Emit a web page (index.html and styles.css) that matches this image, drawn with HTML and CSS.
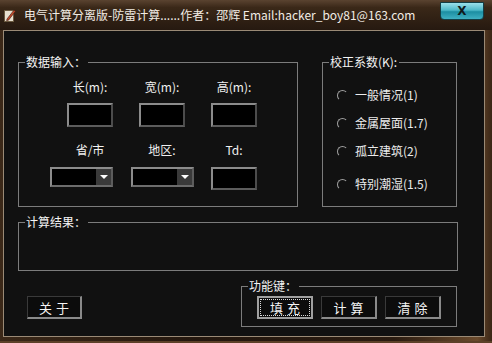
FILE: index.html
```html
<!DOCTYPE html>
<html lang="zh-CN">
<head>
    <meta charset="UTF-8">
    <title>电气计算分离版-防雷计算</title>
    <link rel="stylesheet" href="styles.css">
</head>
<body>
    <div class="window">
        <div class="titlebar">
            <svg class="app-icon" width="12" height="15" viewBox="0 0 12 15">
                <rect x="0.5" y="2.5" width="9" height="11" fill="#e8e0d0" stroke="#6b5a40"/>
                <path d="M3 11 L10 2 L11.5 3.2 L4.5 12.2 L2.6 12.6 Z" fill="#c24a2a" stroke="#3a1a10" stroke-width="0.6"/>
            </svg>
            <span class="title">电气计算分离版-防雷计算......作者：邵辉 Email:hacker_boy81@163.com</span>
            <div class="close">X</div>
        </div>
        <div class="client">
            <div class="top-row">
                <fieldset class="group data">
                    <legend>数据输入：</legend>
                    <div class="data-grid">
                        <span class="lbl">长(m):</span>
                        <span class="lbl">宽(m):</span>
                        <span class="lbl">高(m):</span>
                        <input class="field r1" type="text">
                        <input class="field r1" type="text">
                        <input class="field r1" type="text">
                        <span class="lbl r2">省/市</span>
                        <span class="lbl r2">地区:</span>
                        <span class="lbl r2">Td:</span>
                        <div class="combo first"><span class="combo-btn"></span></div>
                        <div class="combo"><span class="combo-btn"></span></div>
                        <input class="field td" type="text">
                    </div>
                </fieldset>
                <fieldset class="group coef">
                    <legend>校正系数(K):</legend>
                    <div class="radios">
                        <label class="radio"><span class="dot"></span>一般情况(1)</label>
                        <label class="radio"><span class="dot"></span>金属屋面(1.7)</label>
                        <label class="radio"><span class="dot"></span>孤立建筑(2)</label>
                        <label class="radio last"><span class="dot"></span>特别潮湿(1.5)</label>
                    </div>
                </fieldset>
            </div>
            <fieldset class="group result">
                <legend>计算结果：</legend>
            </fieldset>
            <div class="bottom-row">
                <button class="btn about">关于</button>
                <fieldset class="group keys">
                    <legend>功能键：</legend>
                    <div class="key-row">
                        <button class="btn default"><span class="focus">填充</span></button>
                        <button class="btn">计算</button>
                        <button class="btn">清除</button>
                    </div>
                </fieldset>
            </div>
        </div>
    </div>
</body>
</html>
```

FILE: styles.css
```css
body {
    margin: 0;
    padding: 0;
    width: 492px;
    height: 343px;
    overflow: hidden;
    background: #2a1c12;
    font-family: "Noto Sans CJK SC", "DejaVu Sans", sans-serif;
}
.window {
    width: 492px;
    height: 343px;
    box-sizing: border-box;
    display: flex;
    flex-direction: column;
    background: linear-gradient(90deg, #3b2818 0%, #24170e 40%, #2a1b10 80%, #6a4a2c 97%, #3a2616 100%);
    border-bottom: 2px solid #5c4028;
}
.titlebar {
    height: 30px;
    display: flex;
    align-items: flex-start;
    padding: 0 8px 0 4px;
    background: linear-gradient(180deg, #5a4330 0%, #3a2818 25%, #261910 100%);
    box-sizing: border-box;
}
.app-icon {
    margin-top: 8px;
    margin-right: 8px;
    flex: none;
}
.title {
    flex: 1;
    min-width: 0;
    margin-top: 7px;
    color: #f2ece4;
    font-size: 12px;
    line-height: 16px;
    white-space: nowrap;
    overflow: hidden;
}
.close {
    flex: none;
    width: 44px;
    height: 18px;
    margin-top: 2px;
    box-sizing: border-box;
    border: 1px solid #123e46;
    border-radius: 0 0 4px 4px;
    background: linear-gradient(180deg, #9be0ea 0%, #4db8c8 45%, #1c8ea2 55%, #3fb0c2 100%);
    color: #101a1c;
    font: bold 12px/16px "DejaVu Sans", sans-serif;
    text-align: center;
}
.client {
    flex: 1;
    margin: 0 7px 4px 3px;
    background: #111111;
    border: 1px solid #9a8a76;
    padding: 24px 27px 0 14px;
    color: #f0f0f0;
    font-size: 12px;
}
.group {
    margin: 0;
    padding: 0;
    min-inline-size: 0;
    border: 1px solid #7c7c7c;
    box-sizing: border-box;
}
.group legend {
    margin-left: 6px;
    padding: 0 2px 0 1px;
    font-size: 12px;
    line-height: 14px;
    color: #f4f4f4;
}
.top-row {
    display: flex;
    justify-content: space-between;
}
.data {
    width: 280px;
    height: 152px;
}
.data-grid {
    display: grid;
    grid-template-columns: repeat(3, 72px);
    justify-items: center;
    align-items: start;
    padding: 11px 0 0 35px;
}
.lbl {
    line-height: 14px;
    color: #f0f0f0;
}
.lbl.r2 {
    margin-top: 16px;
}
.field {
    width: 46px;
    height: 24px;
    margin: 9px 0 0;
    padding: 0;
    box-sizing: border-box;
    background: #000;
    border: 2px solid;
    border-color: #8c8c8c #4c4c4c #5c5c5c #8c8c8c;
}
.field.td {
    height: 23px;
    margin-top: 10px;
}
.combo {
    width: 63px;
    height: 20px;
    margin-top: 10px;
    box-sizing: border-box;
    background: #000;
    border: 2px solid;
    border-color: #8c8c8c #5c5c5c #6c6c6c #8c8c8c;
    display: flex;
    justify-content: flex-end;
}
.combo.first {
    margin-right: 17px;
}
.combo-btn {
    width: 15px;
    height: 16px;
    background: #3a3a3a;
    position: relative;
}
.combo-btn::after {
    content: "";
    position: absolute;
    left: 4px;
    top: 6px;
    border-left: 4px solid transparent;
    border-right: 4px solid transparent;
    border-top: 4px solid #ffffff;
}
.coef {
    width: 135px;
    height: 152px;
}
.radios {
    display: flex;
    flex-direction: column;
    gap: 14px;
    padding: 19px 0 0 14px;
}
.radio {
    display: flex;
    align-items: center;
    line-height: 14px;
    color: #ececec;
}
.radio.last {
    margin-top: 5px;
}
.dot {
    width: 9px;
    height: 9px;
    margin-right: 7px;
    border-radius: 50%;
    border: 1px solid;
    border-color: #a0a0a0 transparent transparent #a0a0a0;
}
.result {
    width: 440px;
    height: 56px;
    margin-top: 8px;
}
.bottom-row {
    display: flex;
    align-items: flex-start;
    margin-top: 8px;
}
.btn {
    width: 56px;
    height: 23px;
    padding: 0 0 0 4px;
    box-sizing: border-box;
    background: #0c0c0c;
    color: #f4f4f4;
    font-family: "Noto Sans CJK SC", sans-serif;
    font-size: 13px;
    letter-spacing: 4px;
    border-style: solid;
    border-width: 1px 2px 2px 1px;
    border-color: #3a3a3a #8a8a8a #8a8a8a #3a3a3a;
    display: flex;
    align-items: center;
    justify-content: center;
}
.about {
    width: 55px;
    margin: 17px 0 0 9px;
}
.keys {
    width: 216px;
    height: 48px;
    margin-left: auto;
}
.key-row {
    display: flex;
    gap: 8px;
    padding: 3px 0 0 15px;
}
.btn.default {
    padding: 1px;
    border: 2px solid #a0a0a0;
}
.focus {
    flex: 1;
    align-self: stretch;
    display: flex;
    align-items: center;
    justify-content: center;
    padding-left: 4px;
    border: 1px dotted #d8d8d8;
}
```
